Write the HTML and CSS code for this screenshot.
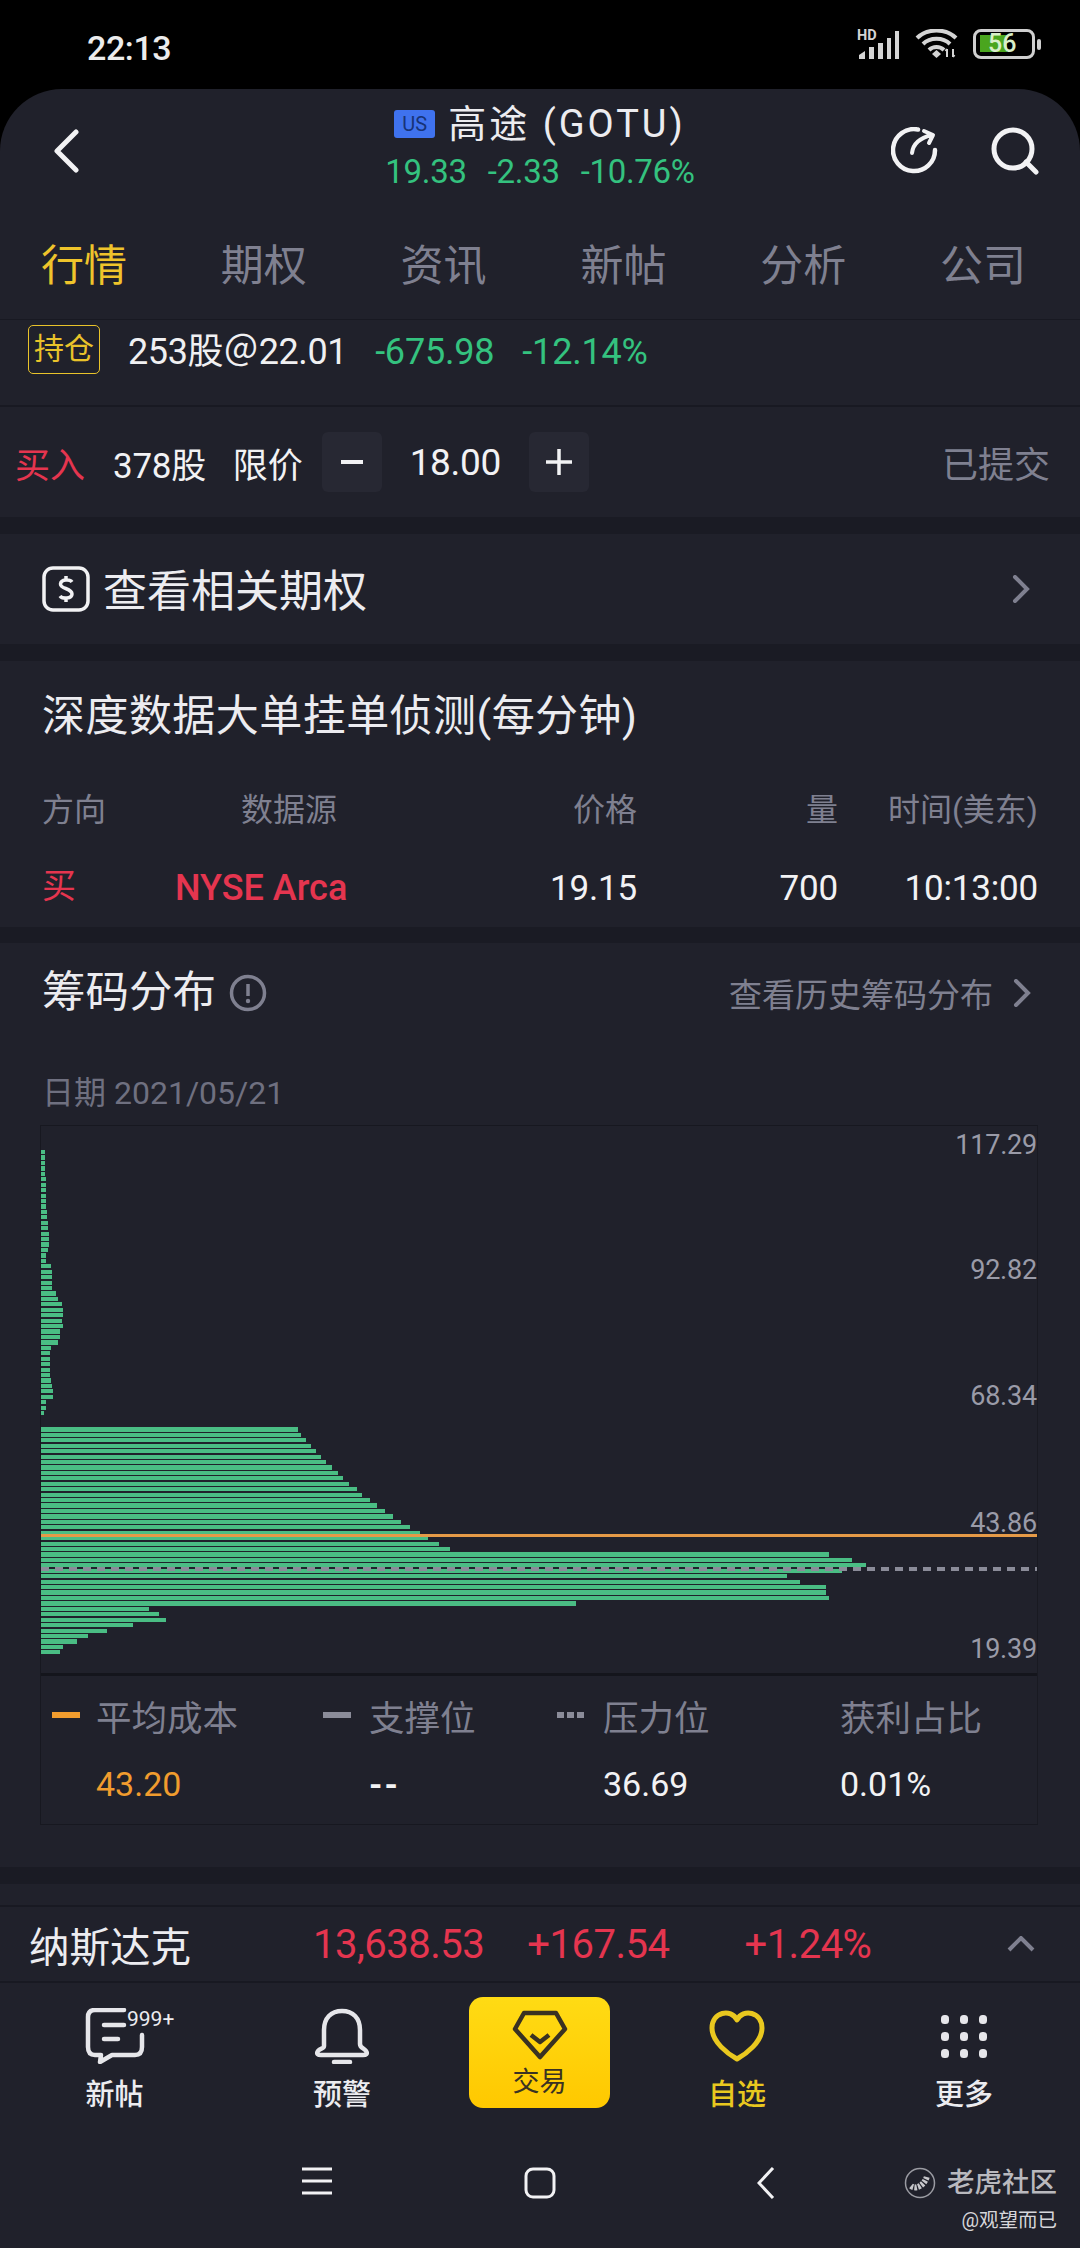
FILE: index.html
```html
<!DOCTYPE html>
<html lang="zh">
<head>
<meta charset="utf-8">
<title>高途 (GOTU)</title>
<link rel="stylesheet" href="styles.css">
</head>
<body>
<div class="phone">
  <div class="statusbar">
    <span class="clock">22:13</span>
    <div class="status-icons">
      <svg class="ic-signal" width="44" height="34" viewBox="0 -4 44 34">
        <text x="0" y="10" class="hd">HD</text>
        <path d="M2 29V25L8 21V29ZM12 29V17H17V29ZM21 29V13H26V29ZM30 29V8H34V29ZM38 29V1H42V29Z" fill="#d4d4d4"/>
      </svg>
      <svg class="ic-wifi" width="44" height="30" viewBox="0 0 44 30">
        <path d="M2 9C12 -1 31 -1 41 9M8 15C15 8 28 8 35 15M14 21C18 17 25 17 29 21" fill="none" stroke="#d4d4d4" stroke-width="4"/>
        <path d="M17 25L21.500 21L26 25L21.500 29Z" fill="#d4d4d4"/>
        <path d="M32 28V20M30.500 22L32 20M38 20V28M39.500 26L38 28" stroke="#d4d4d4" stroke-width="2" fill="none"/>
      </svg>
      <div class="battery"><span class="batt-fill"></span><span class="batt-num">56</span></div>
      <span class="batt-nub"></span>
    </div>
  </div>
  <main class="panel">
    <header class="head">
      <div class="head-left">
        <svg width="28" height="44" viewBox="0 0 28 44"><path d="M24 3L5 22L24 41" fill="none" stroke="#f2f2f4" stroke-width="5" stroke-linecap="round" stroke-linejoin="round"/></svg>
      </div>
      <div class="head-mid">
        <div class="title-line"><span class="us">US</span><span class="title">高途 (GOTU)</span></div>
        <div class="quote"><span>19.33</span><span>-2.33</span><span>-10.76%</span></div>
      </div>
      <div class="head-right">
        <svg width="48" height="48" viewBox="0 0 48 48"><path d="M27 2.500A21 21 0 1 0 44 23" fill="none" stroke="#f2f2f4" stroke-width="4.500" stroke-linecap="round"/><path d="M21 26C22 17 28 11 41 8M33 4L42 8L38 16" fill="none" stroke="#f2f2f4" stroke-width="4" stroke-linecap="round" stroke-linejoin="round"/></svg>
        <svg class="search" width="48" height="48" viewBox="0 0 48 48"><circle cx="22" cy="22" r="19" fill="none" stroke="#f2f2f4" stroke-width="5"/><path d="M35 35L45 45" stroke="#f2f2f4" stroke-width="5" stroke-linecap="round"/></svg>
      </div>
    </header>
    <nav class="tabs">
      <span class="tab on">行情</span><span class="tab">期权</span><span class="tab">资讯</span><span class="tab">新帖</span><span class="tab">分析</span><span class="tab">公司</span>
    </nav>
    <section class="hold">
      <span class="hold-tag">持仓</span>
      <span class="hold-txt">253股＠22.01</span>
      <span class="hold-g">-675.98</span>
      <span class="hold-g">-12.14%</span>
    </section>
    <section class="order">
      <span class="red buy">买入</span>
      <span class="order-qty">378股</span>
      <span class="order-type">限价</span>
      <span class="step">
        <svg width="22" height="22" viewBox="0 0 22 22"><path d="M0 11H22" stroke="#f2f2f4" stroke-width="4"/></svg>
      </span>
      <span class="order-price">18.00</span>
      <span class="step">
        <svg width="26" height="26" viewBox="0 0 26 26"><path d="M0 13H26M13 0V26" stroke="#f2f2f4" stroke-width="3.500"/></svg>
      </span>
      <span class="order-state">已提交</span>
    </section>
    <div class="band"></div>
    <section class="option">
      <svg width="48" height="46" viewBox="0 0 48 46"><rect x="2" y="2" width="44" height="42" rx="9" fill="none" stroke="#f2f2f4" stroke-width="3.500"/><path d="M30 16C28 13 19 13 18.500 18C18 23 30 22 30 28C30 33 20 33 18 30M24 10V13M24 33V36" fill="none" stroke="#f2f2f4" stroke-width="3.500"/></svg>
      <span class="option-txt">查看相关期权</span>
      <svg class="chev" width="18" height="28" viewBox="0 0 18 28"><path d="M3 2L15 14L3 26" fill="none" stroke="#7f8090" stroke-width="4" stroke-linecap="round"/></svg>
    </section>
    <div class="band"></div>
    <section class="depth">
      <h2 class="sec-title depth-title">深度数据大单挂单侦测(每分钟)</h2>
      <div class="drow dhead"><span>方向</span><span class="ds">数据源</span><span class="r">价格</span><span class="r">量</span><span class="r">时间(美东)</span></div>
      <div class="drow dbody"><span class="red buy-one">买</span><span class="red arca">NYSE Arca</span><span class="r">19.15</span><span class="r">700</span><span class="r">10:13:00</span></div>
    </section>
    <div class="band band-s"></div>
    <section class="chips">
      <div class="chips-head">
        <h2 class="sec-title">筹码分布</h2>
        <svg class="info" width="38" height="38" viewBox="0 0 38 38"><circle cx="19" cy="19" r="16.500" fill="none" stroke="#7f8090" stroke-width="3.500"/><path d="M19 10V22" stroke="#7f8090" stroke-width="3.500"/><circle cx="19" cy="27" r="2.200" fill="#7f8090"/></svg>
        <span class="hist">查看历史筹码分布</span>
        <svg class="chev" width="18" height="28" viewBox="0 0 18 28"><path d="M3 2L15 14L3 26" fill="none" stroke="#7f8090" stroke-width="4" stroke-linecap="round"/></svg>
      </div>
      <div class="date">日期 2021/05/21</div>
      <div class="chart">
        <div class="plot">
          <div class="bars">
            <i style="width:4px"></i><i style="width:4px"></i><i style="width:4px"></i><i style="width:4px"></i><i style="width:4px"></i><i style="width:5px"></i><i style="width:5px"></i><i style="width:5px"></i><i style="width:5px"></i><i style="width:5px"></i><i style="width:5px"></i><i style="width:6px"></i><i style="width:6px"></i><i style="width:7px"></i><i style="width:7px"></i><i style="width:8px"></i><i style="width:8px"></i><i style="width:8px"></i><i style="width:7px"></i><i style="width:5px"></i><i style="width:5px"></i><i style="width:10px"></i><i style="width:11px"></i><i style="width:11px"></i><i style="width:11px"></i><i style="width:11px"></i><i style="width:15px"></i><i style="width:17px"></i><i style="width:21px"></i><i style="width:22px"></i><i style="width:22px"></i><i style="width:21px"></i><i style="width:22px"></i><i style="width:19px"></i><i style="width:19px"></i><i style="width:17px"></i><i style="width:10px"></i><i style="width:9px"></i><i style="width:9px"></i><i style="width:9px"></i><i style="width:9px"></i><i style="width:9px"></i><i style="width:10px"></i><i style="width:11px"></i><i style="width:12px"></i><i style="width:12px"></i><i style="width:5px"></i><i style="width:5px"></i><i style="width:3px"></i><i style="width:0"></i><i style="width:0"></i><i style="width:257px"></i><i style="width:260px"></i><i style="width:265px"></i><i style="width:270px"></i><i style="width:275px"></i><i style="width:280px"></i><i style="width:285px"></i><i style="width:291px"></i><i style="width:297px"></i><i style="width:302px"></i><i style="width:308px"></i><i style="width:316px"></i><i style="width:321px"></i><i style="width:329px"></i><i style="width:336px"></i><i style="width:344px"></i><i style="width:352px"></i><i style="width:360px"></i><i style="width:369px"></i><i style="width:379px"></i><i style="width:387px"></i><i style="width:398px"></i><i style="width:409px"></i><i style="width:788px"></i><i style="width:811px"></i><i style="width:825px"></i><i style="width:801px"></i><i style="width:746px"></i><i style="width:759px"></i><i style="width:785px"></i><i style="width:785px"></i><i style="width:788px"></i><i style="width:535px"></i><i style="width:108px"></i><i style="width:118px"></i><i style="width:125px"></i><i style="width:92px"></i><i style="width:66px"></i><i style="width:47px"></i><i style="width:36px"></i><i style="width:22px"></i><i style="width:19px"></i>
          </div>
          <span class="axis a1">117.29</span>
          <span class="axis a2">92.82</span>
          <span class="axis a3">68.34</span>
          <span class="axis a4">43.86</span>
          <span class="axis a5">19.39</span>
          <span class="line-avg"></span>
          <span class="line-press"></span>
        </div>
        <div class="legend">
          <div class="lg lg1"><div class="lg-top"><span class="sw sw-o"></span><span>平均成本</span></div><div class="lg-val orange">43.20</div></div>
          <div class="lg lg2"><div class="lg-top"><span class="sw sw-g"></span><span>支撑位</span></div><div class="lg-val lg-dash">--</div></div>
          <div class="lg lg3"><div class="lg-top"><span class="sw sw-d"></span><span>压力位</span></div><div class="lg-val">36.69</div></div>
          <div class="lg lg4"><div class="lg-top"><span>获利占比</span></div><div class="lg-val">0.01%</div></div>
        </div>
      </div>
    </section>
    <div class="band"></div>
    <div class="gap"></div>
    <section class="index">
      <span class="idx-name">纳斯达克</span>
      <span class="red idx-a">13,638.53</span>
      <span class="red idx-b">+167.54</span>
      <span class="red idx-c">+1.24%</span>
      <svg class="caret" width="28" height="16" viewBox="0 0 28 16"><path d="M2 14L14 2L26 14" fill="none" stroke="#7f8090" stroke-width="4"/></svg>
    </section>
    <nav class="bottom">
      <div class="nv nv1">
        <svg width="60" height="56" viewBox="0 0 60 56"><path d="M39 2H10Q3 2 3 9V39Q3 47 10 47H16L15 54L27 47H50Q57 47 57 39V27M19 17H39M19 31H33" fill="none" stroke="#e6e6ea" stroke-width="4.500" stroke-linecap="round" stroke-linejoin="round"/></svg>
        <span class="badge">999+</span>
        <span class="nv-l">新帖</span>
      </div>
      <div class="nv nv2">
        <svg width="58" height="56" viewBox="0 0 58 56"><path d="M11 38V22C11 10 18 3 29 3C40 3 47 10 47 22V36C47 40 51 40 53 43C55 46 53 47 50 47H8C5 47 3 46 5 43C7 40 11 41 11 38ZM21 54H37" fill="none" stroke="#e6e6ea" stroke-width="4.500" stroke-linecap="round" stroke-linejoin="round"/></svg>
        <span class="nv-l">预警</span>
      </div>
      <div class="trade">
        <svg width="56" height="52" viewBox="0 0 56 52"><path d="M12 4H44L53 20L28 48L3 20ZM19 26L28 33L37 26" fill="none" stroke="#3a3222" stroke-width="4.500" stroke-linejoin="round"/></svg>
        <span class="trade-l">交易</span>
      </div>
      <div class="nv nv4">
        <svg width="56" height="54" viewBox="0 0 56 54"><path d="M28 11C22 -1 3 3 3 19C3 33 19 45 28 50C37 45 53 33 53 19C53 3 34 -1 28 11Z" fill="none" stroke="#e9c81f" stroke-width="5" stroke-linejoin="round"/></svg>
        <span class="nv-l nv-on">自选</span>
      </div>
      <div class="nv nv5">
        <svg class="dots" width="56" height="56" viewBox="0 0 56 56"><g fill="#e6e6ea"><rect x="5" y="7" width="8" height="9" rx="3.500"/><rect x="24" y="7" width="8" height="9" rx="3.500"/><rect x="43" y="7" width="8" height="9" rx="3.500"/><rect x="5" y="24" width="8" height="9" rx="3.500"/><rect x="24" y="24" width="8" height="9" rx="3.500"/><rect x="43" y="24" width="8" height="9" rx="3.500"/><rect x="5" y="41" width="8" height="9" rx="3.500"/><rect x="24" y="41" width="8" height="9" rx="3.500"/><rect x="43" y="41" width="8" height="9" rx="3.500"/></g></svg>
        <span class="nv-l">更多</span>
      </div>
    </nav>
    <footer class="softnav">
      <svg class="sk1" width="30" height="28" viewBox="0 0 30 28"><path d="M0 2H30M0 14H30M0 26H30" stroke="#f2f2f4" stroke-width="3"/></svg>
      <svg class="sk2" width="32" height="32" viewBox="0 0 32 32"><rect x="2" y="2" width="28" height="28" rx="7" fill="none" stroke="#f2f2f4" stroke-width="3"/></svg>
      <svg class="sk3" width="18" height="32" viewBox="0 0 18 32"><path d="M16 1L2 16L16 31" fill="none" stroke="#f2f2f4" stroke-width="3"/></svg>
      <div class="wm">
        <div class="wm-top">
          <svg width="32" height="32" viewBox="0 0 32 32"><circle cx="16" cy="16" r="14.500" fill="none" stroke="#9a9ba2" stroke-width="1.500"/><path d="M7 19C12 23 21 18 23 9" fill="none" stroke="#c8c8cc" stroke-width="6" stroke-dasharray="2.500 1.200"/></svg>
          <span>老虎社区</span>
        </div>
        <div class="wm-user">@观望而已</div>
      </div>
    </footer>
  </main>
</div>
</body>
</html>
```

FILE: styles.css
```css
* { box-sizing: border-box; }
html, body { margin: 0; padding: 0; background: #000; }
body { font-family: Roboto, "Noto Sans CJK SC", sans-serif; color: #f2f2f4; }
h2 { margin: 0; font-weight: 400; }
svg { display: block; flex: none; }

.phone { width: 1080px; height: 2248px; overflow: hidden; background: #000; }

.statusbar { height: 89px; display: flex; align-items: flex-start; justify-content: space-between; padding: 28px 39px 0 87px; }
.clock { font-size: 34px; line-height: 40px; color: #ececec; letter-spacing: -.4px; font-weight: 500; }
.status-icons { display: flex; align-items: center; gap: 0; padding-top: 0; }
.ic-signal { margin-top: -2px; }
.hd { font: 700 14.5px Roboto, sans-serif; fill: #d4d4d4; }
.ic-wifi { margin-left: 14px; }
.battery { position: relative; width: 62px; height: 30px; margin-left: 14px; border: 3.5px solid #cfcfcf; border-radius: 8px; }
.batt-fill { position: absolute; left: 4px; top: 3px; width: 27px; height: 17px; background: #4aa51e; }
.batt-num { position: absolute; left: 12px; top: -2px; font-size: 25px; line-height: 28px; font-weight: 500; color: #d8efc8; }
.batt-nub { width: 4px; height: 11px; margin-left: 2px; background: #cfcfcf; border-radius: 2px; }

.panel { background: #20212b; border-radius: 62px 62px 0 0; height: 2159px; }

.head { height: 130px; display: grid; grid-template-columns: 1fr auto 1fr; padding: 0 41px; }
.head-left { padding: 40px 0 0 11px; }
.head-mid { padding-top: 13px; }
.head-right { display: flex; justify-content: flex-end; gap: 52px; padding-top: 38px; }
.title-line { display: flex; align-items: center; justify-content: center; height: 44px; gap: 13px; }
.us { width: 41px; height: 28px; background: #3f72ee; border-radius: 3px; font-size: 20px; line-height: 28px; text-align: center; color: #173377; }
.title { font-size: 38px; line-height: 44px; color: #ececf0; letter-spacing: 3px; }
.quote { display: flex; justify-content: center; gap: 21px; margin-top: 4px; font-size: 33px; line-height: 44px; color: #34c27f; letter-spacing: -.3px; }

.tabs { height: 101px; display: flex; justify-content: space-between; align-items: center; padding: 0 54px 6px 41px; border-bottom: 1px solid #181922; }
.tab { font-size: 43px; line-height: 56px; color: #7f8090; }
.tab.on { color: #efc42b; }

.hold { height: 87px; display: flex; align-items: flex-start; padding: 4px 0 0 28px; border-bottom: 2px solid #181922; }
.hold-tag { width: 72px; height: 49px; margin-top: 1px; border: 1.5px solid #e9c32a; border-radius: 5px; font-size: 30px; line-height: 46px; text-align: center; color: #e9c32a; }
.hold-txt { margin-left: 28px; font-size: 36px; line-height: 56px; color: #f0f0f2; letter-spacing: -.4px; }
.hold-g { margin-left: 28px; font-size: 36px; line-height: 56px; color: #34c27f; letter-spacing: -.2px; }

.order { height: 110px; display: flex; align-items: center; padding: 0 30px 0 15px; font-size: 35px; }
.order-qty { margin-left: 28px; font-size: 35px; letter-spacing: -.3px; }
.order-type { margin-left: 27px; }
.step { width: 60px; height: 60px; margin-left: 19px; display: flex; align-items: center; justify-content: center; background: #272833; border-radius: 6px; }
.order-price { width: 147px; text-align: center; font-size: 37px; font-weight: 400; letter-spacing: -.3px; }
.order-price + .step { margin-left: 0; }
.order-state { margin-left: auto; color: #7f8090; font-size: 36px; }

.band { height: 17px; background: #1a1b24; }
.band-s { height: 16px; }

.option { height: 110px; display: flex; align-items: center; padding: 0 50px 0 42px; }
.option-txt { margin-left: 13px; padding-top: 5px; font-size: 44px; line-height: 56px; color: #ececf0; }
.chev { margin-left: auto; }

.sec-title { font-size: 43px; line-height: 56px; color: #ececf0; }
.depth-title { letter-spacing: .45px; }
.depth { height: 266px; padding: 27px 42px 0; }
.drow { display: grid; grid-template-columns: 134px 1fr 150px 201px 200px; align-items: center; }
.dhead { height: 60px; margin-top: 33px; font-size: 32px; color: #7f8090; }
.dbody { height: 60px; margin-top: 21px; font-size: 35px; font-weight: 400; letter-spacing: -.2px; }
.ds { margin-left: 65px; }
.buy-one { font-size: 34px; line-height: 50px; margin-top: -5px; }
.arca { font-size: 36px; font-weight: 500; letter-spacing: 0; margin-left: -1px; }
.r { text-align: right; }

.chips { height: 924px; padding: 22px 42px 0 40px; }
.chips-head { height: 56px; display: flex; align-items: center; padding-left: 2px; }
.chips-head .sec-title { font-size: 43.5px; }
.info { margin-left: 13px; }
.hist { margin-left: auto; font-size: 33px; color: #7f8090; }
.chips-head .chev { margin-left: 20px; margin-right: 7px; }
.date { height: 50px; margin-top: 47px; padding-left: 2px; font-size: 32px; line-height: 50px; color: #6f7080; }

.chart { margin-top: 7px; border: 1px solid #171820; border-right-color: #191a22; height: 700px; display: flex; flex-direction: column; }
.plot { position: relative; height: 550px; padding-top: 24px; overflow: visible; border-bottom: 3px solid #14151c; }
.bars { display: flex; flex-direction: column; gap: 1.26px; }
.bars i { display: block; height: 4.2px; background: #4abd84; }
.axis { position: absolute; right: 0; font-size: 27px; line-height: 32px; color: #9a9ba8; letter-spacing: -.2px; }
.a1 { top: 3px; }
.a2 { top: 128px; }
.a3 { top: 254px; }
.a4 { top: 381px; }
.a5 { top: 507px; }
.line-avg { position: absolute; left: 0; right: 0; top: 408px; height: 3px; background: #e59a47; }
.line-press { position: absolute; left: 0; right: 0; top: 441px; height: 4px; background: repeating-linear-gradient(90deg, #8b8c99 0 8px, transparent 8px 14px); }

.legend { flex: 1; display: grid; grid-template-columns: 271px 234px 283px 1fr; padding: 11px 0 0 11px; }
.lg-top { height: 56px; display: flex; align-items: center; font-size: 35.5px; color: #7f8090; }
.lg-val { height: 56px; margin-top: 13px; padding-left: 44px; font-size: 34px; line-height: 56px; font-weight: 400; letter-spacing: 0; }
.lg2 .lg-val { padding-left: 46px; }
.lg3 .lg-val { padding-left: 46px; }
.lg4 .lg-val { padding-left: 0; }
.lg2 .lg-dash { font-weight: 700; letter-spacing: 2px; }
.sw { width: 28px; height: 6px; margin-right: 16px; }
.lg2 .sw, .lg3 .sw { margin-right: 18px; }
.sw-o { background: #f19c2e; }
.sw-g { background: #8b8c99; }
.sw-d { background: repeating-linear-gradient(90deg, #8b8c99 0 7px, transparent 7px 10px); }
.orange { color: #f19c2e; }
.red { color: #e5354f; }

.gap { height: 23px; border-bottom: 2px solid #181922; }

.index { height: 76px; display: flex; align-items: center; padding: 0 45px 0 29px; border-bottom: 2px solid #181922; font-size: 40px; letter-spacing: -.5px; }
.idx-name { width: 284px; font-size: 40.5px; letter-spacing: 0; color: #ececf0; }
.idx-b { margin-left: 43px; }
.idx-c { margin-left: 75px; }
.caret { margin-left: auto; }

.bottom { position: relative; height: 136px; display: grid; grid-template-columns: 229px 226px 155px 254px 200px; }
.nv { position: relative; display: flex; flex-direction: column; align-items: center; padding-top: 25px; }
.nv svg { height: 56px; }
.nv-l { margin-top: 12px; font-size: 29px; line-height: 38px; font-weight: 500; color: #ececf0; }
.nv-l.nv-on { color: #e9c81f; }
.badge { position: absolute; left: 127px; top: 23px; font-size: 21px; line-height: 26px; color: #ececf0; }
.trade { margin: 14px 0 0 14px; height: 111px; width: 141px; display: flex; flex-direction: column; align-items: center; padding-top: 12px; background: linear-gradient(#ffdb14, #ffc800); border-radius: 14px; }
.trade-l { margin-top: 4px; font-size: 27px; line-height: 34px; color: #3a3222; }

.softnav { position: relative; height: 128px; display: flex; align-items: flex-start; padding-top: 48px; }
.sk1 { margin-left: 302px; }
.sk2 { margin-left: 192px; }
.sk3 { margin-left: 201px; }
.wm { margin-left: 129px; }
.wm-top { display: flex; align-items: center; gap: 11px; font-size: 27.5px; line-height: 32px; color: #b9b9be; font-weight: 500; }
.wm-user { margin-top: 8px; text-align: right; font-size: 19.5px; line-height: 28px; color: #d6d6da; }
```
